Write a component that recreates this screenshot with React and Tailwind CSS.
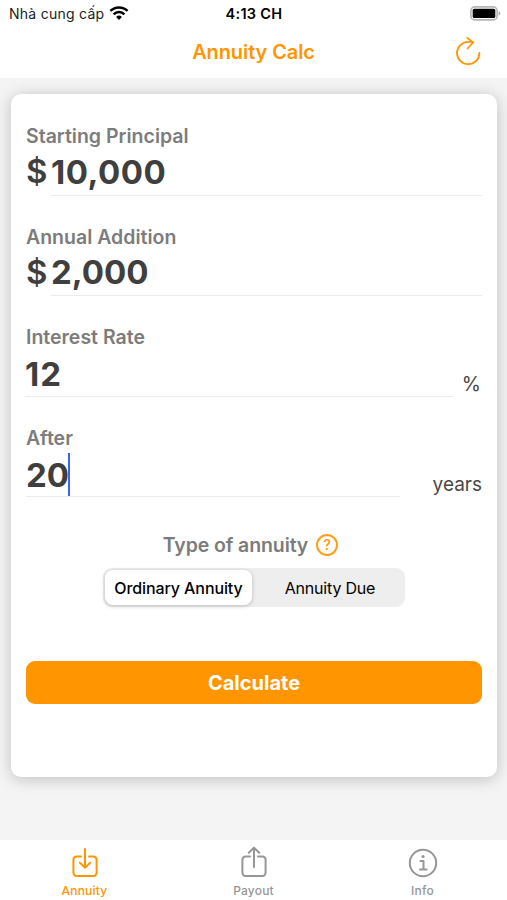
import React from "react";

function Wifi() {
  return (
    <svg width="20" height="16" viewBox="0 0 20 16" fill="none" stroke="#000" strokeWidth="2.5">
      <path d="M1.4 4.9a12.4 12.4 0 0 1 17.2 0" />
      <path d="M4.6 8.3a7.7 7.7 0 0 1 10.8 0" />
      <path d="M10 13.9l-2.9-3a4.1 4.1 0 0 1 5.8 0z" fill="#000" stroke="none" />
    </svg>
  );
}

function Battery() {
  return (
    <svg className="-mt-[2px]" width="31" height="15" viewBox="0 0 31 15" fill="none">
      <rect x="0.9" y="0.9" width="26.2" height="13" rx="4" stroke="#b5b5b5" strokeWidth="1.6" />
      <rect x="2.7" y="2.7" width="22.6" height="9.4" rx="1.5" fill="#000" />
      <path d="M28.6 5.2c2.2.6 2.2 3.8 0 4.4z" fill="#aaa" />
    </svg>
  );
}

function Field({ label, prefix, value, suffix, caret, valueClass, lineClass, suffixClass }) {
  return (
    <div className="h-[100.6px]">
      <div className={"h-6 text-[19.5px] leading-6 font-semibold text-[#7c7c7c]"}>{label}</div>
      <div className="flex h-[47.5px] text-[#3f3f3f]">
        {prefix && <span className="w-[25px] text-[33px] leading-[47px] font-semibold">{prefix}</span>}
        <div className={"flex h-[47.5px] border-b border-[#ececec] " + lineClass}>
          <span className={"text-[33px] font-bold " + valueClass}>{value}</span>
          {caret && <span className="mt-[3px] -ml-px h-[43px] w-[2px] bg-[#3f63e8]" />}
        </div>
        {suffix && <span className={"ml-auto pt-[23px] leading-6 text-[#484848] " + suffixClass}>{suffix}</span>}
      </div>
    </div>
  );
}

function Tab({ label, active, children }) {
  return (
    <div className={"flex flex-1 flex-col items-center pt-[6px] " + (active ? "text-[#ff9500]" : "text-[#969696]")}>
      <svg width="34" height="34" viewBox="0 0 34 34" fill="none" stroke="currentColor" strokeWidth="2" strokeLinecap="round" strokeLinejoin="round">
        {children}
      </svg>
      <span className="mt-[3px] text-[12px] leading-4 font-medium tracking-[0.2px]">{label}</span>
    </div>
  );
}

export default function App() {
  return (
    <div className="flex h-[900px] w-[507px] flex-col overflow-hidden bg-[#f4f4f4] font-['Inter','Liberation_Sans',sans-serif]">
      <header className="relative z-10 h-[78px] bg-white">
        <div className="grid h-7 grid-cols-3 items-center pr-[6px] pl-[9px] text-[14px] text-black">
          <div className="flex items-center gap-[5px] whitespace-nowrap">
            <span className="-mt-px tracking-[0.26px] text-[#222]">Nhà cung cấp</span>
            <Wifi />
          </div>
          <span className="-mt-px pr-[2px] text-center text-[14.5px] font-semibold tracking-[0.3px]">4:13 CH</span>
          <div className="flex justify-end">
            <Battery />
          </div>
        </div>
        <div className="grid h-12 grid-cols-[1fr_auto_1fr] items-center text-[#ff9500]">
          <span />
          <h1 className="text-[20px] font-semibold tracking-[-0.1px]">Annuity Calc</h1>
          <svg className="mr-[26px] justify-self-end" width="26" height="30" viewBox="0 0 26 30" fill="none" stroke="currentColor" strokeWidth="1.8" strokeLinecap="round" strokeLinejoin="round">
            <path d="M24.4 16a11.2 11.2 0 1 1-11.2-11.2h4.6" />
            <path d="M12.2 0.9l6 4.6-5.6 6" />
          </svg>
        </div>
      </header>

      <main className="h-[762px] px-[11px] pt-4 pr-[10px]">
        <section className="h-[683px] rounded-[10px] bg-white px-[15px] pt-[30px] shadow-[0_2px_16px_rgba(0,0,0,0.22)]">
          <Field label="Starting Principal" prefix="$" value="10,000" valueClass="leading-[48px] tracking-[0.5px]" lineClass="flex-1" />
          <Field label="Annual Addition" prefix="$" value="2,000" valueClass="leading-[47px]" lineClass="flex-1" />
          <Field label="Interest Rate" value="12" suffix="%" suffixClass="pr-px text-[19.5px]" valueClass="leading-[51px] tracking-[1px]" lineClass="w-[428px] -ml-px" />
          <Field label="After" value="20" suffix="years" suffixClass="text-[19px]" caret valueClass="leading-[51px]" lineClass="w-[374px]" />

          <div className="mt-[7px] flex items-center justify-center gap-2 pr-[7px]">
            <span className="text-[19.5px] leading-6 font-semibold tracking-[-0.1px] text-[#7c7c7c]">Type of annuity</span>
            <span className="flex size-[22px] items-center justify-center rounded-full border-2 border-[#ff9f1a] text-[14px] leading-none font-medium text-[#ff9500]">?</span>
          </div>

          <div className="mx-auto mt-[11px] flex h-[39px] w-[302px] rounded-[9px] bg-[#eeeeee] p-[2px] text-[16px] font-medium text-black">
            <div className="flex w-[147px] items-center justify-center rounded-[8px] bg-white tracking-[-0.1px] shadow-[0_1px_4px_rgba(0,0,0,0.22)]">Ordinary Annuity</div>
            <div className="flex flex-1 items-center justify-center pl-[5px] font-normal tracking-[-0.2px]">Annuity Due</div>
          </div>

          <button className="mt-[54px] h-[43px] w-full rounded-[9px] bg-[#ff9500] text-[20px] font-bold text-white">Calculate</button>
        </section>
      </main>

      <nav className="relative z-10 flex h-[60px] bg-white">
        <Tab label="Annuity" active>
          <path d="M13 10.5H8.6a3.2 3.2 0 0 0-3.2 3.2v13a3.2 3.2 0 0 0 3.2 3.2h16.8a3.2 3.2 0 0 0 3.2-3.2v-13a3.2 3.2 0 0 0-3.2-3.2H21" />
          <path d="M17 3v18.5M11.8 16.6l5.2 5.2 5.2-5.2" />
        </Tab>
        <Tab label="Payout">
          <path d="M13 10.5H8.6a3.2 3.2 0 0 0-3.2 3.2v13a3.2 3.2 0 0 0 3.2 3.2h16.8a3.2 3.2 0 0 0 3.2-3.2v-13a3.2 3.2 0 0 0-3.2-3.2H21" />
          <path d="M17 21V1.8M11.8 6.8L17 1.6l5.2 5.2" />
        </Tab>
        <Tab label="Info">
          <circle cx="17" cy="17" r="13.2" />
          <path d="M14.5 15h3v8M14 23.4h6.6" />
          <circle cx="17" cy="10.5" r="1.6" fill="currentColor" stroke="none" />
        </Tab>
      </nav>
    </div>
  );
}
